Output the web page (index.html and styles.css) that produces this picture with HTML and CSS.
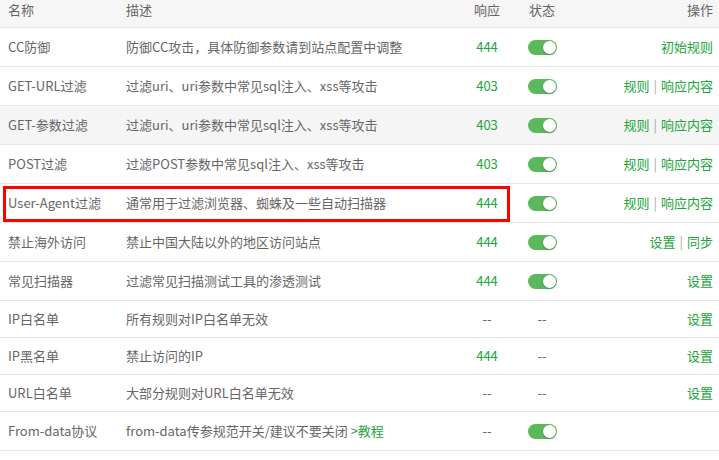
FILE: index.html
```html
<!DOCTYPE html>
<html lang="zh-CN">

<head>
    <title>防火墙规则</title>
    <meta charset="UTF-8">
    <link rel="stylesheet" href="styles.css">
</head>

<body>
    <div class="wf-wrap">
        <table class="wf-table">
            <colgroup>
                <col class="wf-col-name">
                <col class="wf-col-desc">
                <col class="wf-col-code">
                <col class="wf-col-state">
                <col>
            </colgroup>
            <thead>
                <tr>
                    <th>名称</th>
                    <th>描述</th>
                    <th class="center">响应</th>
                    <th class="center">状态</th>
                    <th class="right">操作</th>
                </tr>
            </thead>
            <tbody>
                <tr>
                    <td>CC防御</td>
                    <td>防御CC攻击，具体防御参数请到站点配置中调整</td>
                    <td class="center green">444</td>
                    <td class="center"><span class="wf-switch"><i></i></span></td>
                    <td class="right"><a>初始规则</a></td>
                </tr>
                <tr>
                    <td>GET-URL过滤</td>
                    <td>过滤uri、uri参数中常见sql注入、xss等攻击</td>
                    <td class="center green">403</td>
                    <td class="center"><span class="wf-switch"><i></i></span></td>
                    <td class="right"><a>规则</a><span class="sep">|</span><a>响应内容</a></td>
                </tr>
                <tr class="hover">
                    <td>GET-参数过滤</td>
                    <td>过滤uri、uri参数中常见sql注入、xss等攻击</td>
                    <td class="center green">403</td>
                    <td class="center"><span class="wf-switch"><i></i></span></td>
                    <td class="right"><a>规则</a><span class="sep">|</span><a>响应内容</a></td>
                </tr>
                <tr>
                    <td>POST过滤</td>
                    <td>过滤POST参数中常见sql注入、xss等攻击</td>
                    <td class="center green">403</td>
                    <td class="center"><span class="wf-switch"><i></i></span></td>
                    <td class="right"><a>规则</a><span class="sep">|</span><a>响应内容</a></td>
                </tr>
                <tr>
                    <td>User-Agent过滤</td>
                    <td>通常用于过滤浏览器、蜘蛛及一些自动扫描器</td>
                    <td class="center green">444</td>
                    <td class="center"><span class="wf-switch"><i></i></span></td>
                    <td class="right"><a>规则</a><span class="sep">|</span><a>响应内容</a></td>
                </tr>
                <tr>
                    <td>禁止海外访问</td>
                    <td>禁止中国大陆以外的地区访问站点</td>
                    <td class="center green">444</td>
                    <td class="center"><span class="wf-switch"><i></i></span></td>
                    <td class="right"><a>设置</a><span class="sep">|</span><a>同步</a></td>
                </tr>
                <tr>
                    <td>常见扫描器</td>
                    <td>过滤常见扫描测试工具的渗透测试</td>
                    <td class="center green">444</td>
                    <td class="center"><span class="wf-switch"><i></i></span></td>
                    <td class="right"><a>设置</a></td>
                </tr>
                <tr>
                    <td>IP白名单</td>
                    <td>所有规则对IP白名单无效</td>
                    <td class="center">--</td>
                    <td class="center">--</td>
                    <td class="right"><a>设置</a></td>
                </tr>
                <tr>
                    <td>IP黑名单</td>
                    <td>禁止访问的IP</td>
                    <td class="center green">444</td>
                    <td class="center">--</td>
                    <td class="right"><a>设置</a></td>
                </tr>
                <tr>
                    <td>URL白名单</td>
                    <td>大部分规则对URL白名单无效</td>
                    <td class="center">--</td>
                    <td class="center">--</td>
                    <td class="right"><a>设置</a></td>
                </tr>
                <tr>
                    <td>From-data协议</td>
                    <td>from-data传参规范开关/建议不要关闭 <a>&gt;教程</a></td>
                    <td class="center">--</td>
                    <td class="center"><span class="wf-switch"><i></i></span></td>
                    <td class="right"></td>
                </tr>
            </tbody>
        </table>
        <div class="wf-mark"></div>
    </div>
</body>

</html>
```

FILE: styles.css
```css
* {
    box-sizing: border-box;
}

body {
    margin: 0;
    background-color: #ffffff;
    font-family: "Noto Sans CJK SC", "Noto Sans", sans-serif;
    font-size: 13px;
    color: #666666;
}

.wf-wrap {
    position: relative;
}

.wf-table {
    width: 100%;
    border-collapse: collapse;
    table-layout: fixed;
}

.wf-col-name {
    width: 118px;
}

.wf-col-desc {
    width: 344px;
}

.wf-col-code {
    width: 50px;
}

.wf-col-state {
    width: 60px;
}

.wf-table th {
    background-color: #f6f6f6;
    font-weight: normal;
    text-align: left;
    padding: 1px 8px 9px;
    line-height: 17px;
    border-bottom: 1px solid #e6e6e6;
    white-space: nowrap;
}

.wf-table td {
    padding: 10px 8px;
    line-height: 16px;
    border-bottom: 1px solid #e6e6e6;
    white-space: nowrap;
}

.wf-table th.right,
.wf-table td.right {
    text-align: right;
    padding-right: 6px;
}

.wf-table th.center,
.wf-table td.center {
    text-align: center;
    padding-left: 0;
    padding-right: 0;
}

.wf-table tr.hover td {
    background-color: #f5f5f5;
}

.green,
.wf-table a {
    color: #20a53a;
    cursor: pointer;
}

.sep {
    color: #aaaaaa;
    margin: 0 4px;
}

.wf-switch {
    display: inline-flex;
    align-items: flex-start;
    vertical-align: top;
    height: 18px;
    padding-top: 2px;
}

.wf-switch i {
    position: relative;
    display: block;
    width: 29px;
    height: 15px;
    border-radius: 8px;
    background-color: #5cb85c;
}

.wf-switch i:after {
    content: "";
    position: absolute;
    top: 1px;
    right: 1px;
    width: 13px;
    height: 13px;
    border-radius: 50%;
    background-color: #ffffff;
    box-shadow: 0 1px 2px rgba(0, 0, 0, 0.25);
}

/* red annotation box over the User-Agent row */
.wf-mark {
    position: absolute;
    left: 3px;
    top: 186px;
    width: 507px;
    height: 36px;
    border: 3px solid #ff0000;
    pointer-events: none;
}
```
